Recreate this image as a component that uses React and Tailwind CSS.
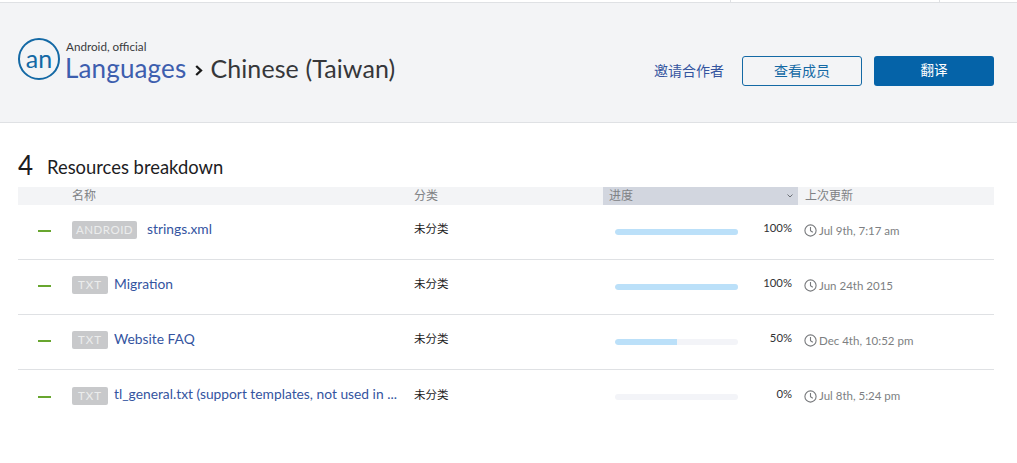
import React from "react";

const rows = [
  { badge: "ANDROID", name: "strings.xml", pct: 100, date: "Jul 9th, 7:17 am" },
  { badge: "TXT", name: "Migration", pct: 100, date: "Jun 24th 2015" },
  { badge: "TXT", name: "Website FAQ", pct: 50, date: "Dec 4th, 10:52 pm" },
  { badge: "TXT", name: "tl_general.txt (support templates, not used in ...", pct: 0, date: "Jul 8th, 5:24 pm" },
];

function Clock() {
  return (
    <svg width="13" height="13" viewBox="0 0 13 13" fill="none" stroke="#77797c" strokeWidth="1.1" className="shrink-0">
      <circle cx="6.5" cy="6.5" r="5.6" />
      <path d="M6.5 3v3.6l2.3 1.6" />
    </svg>
  );
}

function Row({ r, last }) {
  const android = r.badge === "ANDROID";
  return (
    <div className={`flex h-[55px] items-center pb-[4px] ${last ? "" : "border-b border-[#dfe1e4]"}`}>
      <div className="w-[54px] pl-[20px] pt-[2px]">
        <div className="h-[2px] w-[13px] bg-[#68a62f]" />
      </div>
      <div className="flex w-[342px] items-center">
        <span className={`mr-[6px] flex h-[18px] items-center rounded-[2px] bg-[#c8c9cb] text-[11.5px] text-[#eceded] ${android ? "px-[4px] tracking-[0.5px]" : "px-[6px] tracking-[1px]"}`}>
          {r.badge}
        </span>
        <span className={`whitespace-nowrap pb-[2px] text-[13.8px] text-[#34549f] ${android ? "ml-[4px]" : ""}`}>{r.name}</span>
      </div>
      <div className="w-[201px] pb-[2px] text-[11.5px] text-[#1c1c1c]">未分类</div>
      <div className="flex w-[189px] items-center">
        <div className="mt-[3px] h-[6px] w-[123px] overflow-hidden rounded-full bg-[#f3f4f8]">
          <div className="h-full rounded-l-full bg-[#bbe0f9]" style={{ width: `${r.pct}%` }} />
        </div>
        <span className="ml-auto mr-[12px] pb-[3px] text-[11.3px] text-[#303133]">{r.pct}%</span>
      </div>
      <div className="flex items-center gap-[2px] pt-[1px] text-[11.5px] text-[#7d7f82]">
        <Clock />
        <span className="whitespace-nowrap">{r.date}</span>
      </div>
    </div>
  );
}

export default function App() {
  return (
    <div className="h-[463px] w-[1017px] overflow-hidden bg-white font-['Lato','Noto_Sans_CJK_SC',sans-serif]">
      <div className="flex h-[3px] border-b border-[#dfe1e4]">
        <div className="ml-[730px] w-[210px] border-x border-[#dfe1e4]" />
      </div>
      <header className="flex h-[120px] items-center justify-between border-b border-[#dfe1e4] bg-[#f3f4f6] pl-[18px] pr-[23px]">
        <div className="flex items-center pb-[8px]">
          <div className="flex h-[42px] w-[42px] items-center justify-center rounded-full border-[2px] border-[#1469a5] text-[25px] leading-none text-[#1469a5]">
            an
          </div>
          <div className="ml-[6px] flex flex-col pt-[6px]">
            <span className="text-[11.7px] leading-[14px] text-[#3a3b3d]">Android, official</span>
            <div className="-ml-[1px] flex items-center text-[25px] leading-[31px]">
              <span className="text-[26px] tracking-[0.15px] text-[#3d5eae]">Languages</span>
              <svg width="8" height="11" viewBox="0 0 8 11" fill="none" stroke="#1a1a1a" strokeWidth="2.3" className="ml-[9px] mr-[7px] mt-[3px]">
                <path d="M1.2 1 6 5.5 1.2 10" />
              </svg>
              <span className="tracking-[0.1px] text-[#36373a]">Chinese (Taiwan)</span>
            </div>
          </div>
        </div>
        <div className="mt-[16px] flex items-center">
          <span className="mr-[18px] text-[14px] text-[#34549f]">邀请合作者</span>
          <button className="h-[30px] w-[120px] rounded-[3px] border border-[#1469a5] text-[14px] text-[#1469a5]">查看成员</button>
          <button className="ml-[12px] h-[30px] w-[120px] rounded-[3px] bg-[#0563a8] text-[13.5px] text-white">翻译</button>
        </div>
      </header>
      <main className="px-[18px] pr-[23px] pt-[28px]">
        <div className="flex h-[28px] items-center">
          <span className="w-[29px] text-[26px] leading-none text-[#1d1d1f]">4</span>
          <span className="pt-[6px] text-[18.4px] text-[#1d1d1f]">Resources breakdown</span>
        </div>
        <div className="mt-[8px] flex h-[18px] items-center bg-[#f3f4f6] text-[12px] text-[#808285]">
          <span className="w-[396px] pl-[54px]">名称</span>
          <span className="w-[189px]">分类</span>
          <span className="flex h-full w-[195px] items-center justify-between bg-[#d2d6df] pl-[6px] pr-[5px]">
            进度
            <svg width="6" height="4" viewBox="0 0 6 4" fill="none" stroke="#6c7076" strokeWidth="1"><path d="M.5.5 3 3 5.5.5" /></svg>
          </span>
          <span className="pl-[7px]">上次更新</span>
        </div>
        {rows.map((r, i) => (
          <Row key={r.name} r={r} last={i === rows.length - 1} />
        ))}
      </main>
    </div>
  );
}
